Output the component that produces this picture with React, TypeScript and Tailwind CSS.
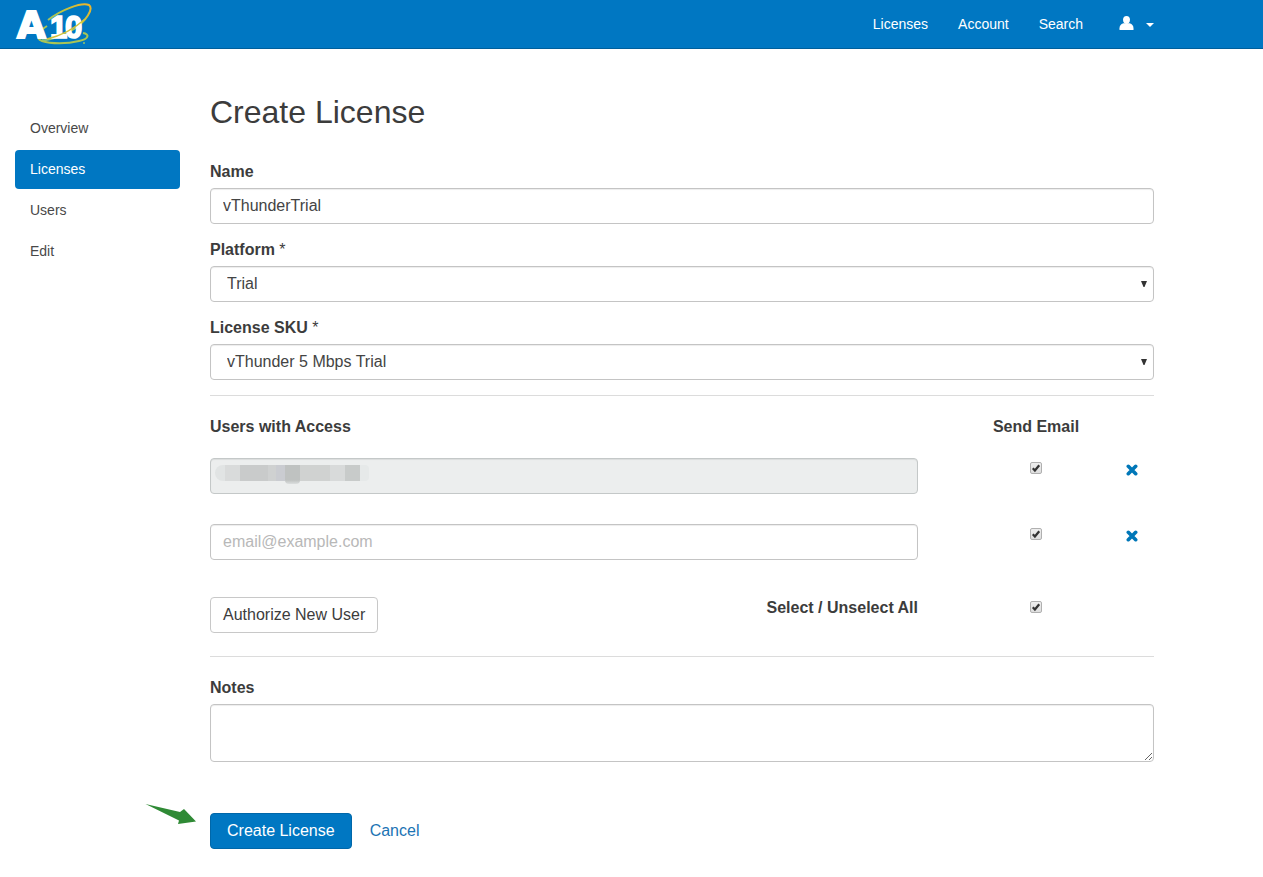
import { useState, type ReactNode } from "react";

const navLinks = ["Licenses", "Account", "Search"];
const sideLinks = ["Overview", "Licenses", "Users", "Edit"];

const control =
  "block w-full rounded-[4px] border border-[#c4c4c4] bg-white text-base text-[#444] shadow-[inset_0_1px_1px_rgba(0,0,0,0.075)] outline-none focus:border-[#0077c2]";

function Logo() {
  return (
    <svg width="80" height="44" viewBox="0 0 80 44" role="img" aria-label="A10">
      <defs>
        <linearGradient id="orbit" x1="0" y1="1" x2="1" y2="0">
          <stop offset="0" stopColor="#7fbf8a" />
          <stop offset="0.6" stopColor="#b9c544" />
          <stop offset="1" stopColor="#f0b429" />
        </linearGradient>
      </defs>
      <path
        d="M33 18 C46 8 66 0 74 3 C79 7 71 19 59 27 C46 35 32 39 27 38"
        fill="none"
        stroke="url(#orbit)"
        strokeWidth="2"
      />
      <path
        d="M68 31 C75 32 74 37 64 39 C52 42 36 42 27 39 C19 36 24 29 32 24"
        fill="none"
        stroke="#a9c455"
        strokeWidth="2"
      />
      <text
        x="2"
        y="36"
        fontFamily="DejaVu Sans"
        fontWeight="700"
        fontSize="37"
        fill="#fff"
        stroke="#fff"
        strokeWidth="2"
      >
        A
      </text>
      <text
        x="35 50"
        y="36"
        fontFamily="Liberation Sans"
        fontWeight="700"
        fontSize="31"
        fill="#fff"
        stroke="#fff"
        strokeWidth="1.600"
      >
        10
      </text>
      <path d="M70 17 C58 28 45 34 32 37" fill="none" stroke="#d3c33a" strokeWidth="1.400" />
      <circle cx="69" cy="41" r="1" fill="#8fc36b" />
    </svg>
  );
}

function UserIcon() {
  return (
    <svg width="15" height="14" viewBox="0 0 15 14" fill="#fff" aria-hidden="true">
      <path d="M7.5 0C9.7 0 11 1.5 11 3.7C11 6 9.600 8 7.500 8C5.400 8 4 6 4 3.700C4 1.500 5.300 0 7.500 0Z" />
      <path d="M4.300 7.200H10.700C13.300 8.100 14.500 9.700 14.500 12.200V14H0.500V12.200C0.500 9.700 1.700 8.100 4.300 7.200Z" />
    </svg>
  );
}

function Header() {
  return (
    <header className="border-b border-[#005f9b] bg-[#0077c2]">
      <div className="flex h-12 max-w-[1169px] items-center justify-between px-[15px]">
        <a href="#home" aria-label="A10 home">
          <Logo />
        </a>
        <nav className="flex items-center gap-[30px] text-sm text-white">
          {navLinks.map((label) => (
            <a key={label} href={"#" + label.toLowerCase()}>
              {label}
            </a>
          ))}
          <button type="button" aria-label="User menu" className="ml-[6px] flex items-center gap-3 pb-[2px]">
            <UserIcon />
            <svg width="8" height="4" viewBox="0 0 8 4" fill="#fff" className="mt-1" aria-hidden="true">
              <path d="M0 0H8L4 4Z" />
            </svg>
          </button>
        </nav>
      </div>
    </header>
  );
}

function Sidebar() {
  return (
    <nav className="flex w-[165px] shrink-0 flex-col gap-[2px] pt-[60px] text-sm">
      {sideLinks.map((label) => (
        <a
          key={label}
          href={"#side-" + label.toLowerCase()}
          className={
            label === "Licenses"
              ? "rounded-[4px] bg-[#0077c2] px-[15px] py-[9px] leading-[21px] text-white"
              : "rounded-[4px] px-[15px] py-[9px] leading-[21px] text-[#484848]"
          }
        >
          {label}
        </a>
      ))}
    </nav>
  );
}

function Label({ htmlFor, required, children }: { htmlFor: string; required?: boolean; children: ReactNode }) {
  return (
    <label htmlFor={htmlFor} className="mb-1 block leading-6 font-bold">
      {children}
      {required && <span className="font-normal"> *</span>}
    </label>
  );
}

function Select({ id, options }: { id: string; options: string[] }) {
  return (
    <div className="relative">
      <select id={id} className={control + " h-9 appearance-none px-4"}>
        {options.map((option) => (
          <option key={option}>{option}</option>
        ))}
      </select>
      <svg
        width="6"
        height="6"
        viewBox="0 0 6 6"
        className="pointer-events-none absolute top-[15px] right-[7px]"
        aria-hidden="true"
      >
        <path d="M0 0H6L3.500 6H2.500Z" fill="#333" />
      </svg>
    </div>
  );
}

function Checkbox({ id, label, checked, onChange }: { id: string; label?: string; checked: boolean; onChange: () => void }) {
  return (
    <span className="relative block size-3">
      <input
        id={id}
        type="checkbox"
        aria-label={label}
        checked={checked}
        onChange={onChange}
        className="block size-3 appearance-none rounded-[2px] border border-[#b0b0b0] bg-linear-to-b from-[#eee] to-[#dedede]"
      />
      {checked && (
        <svg width="12" height="12" viewBox="0 0 13 13" className="pointer-events-none absolute inset-0" aria-hidden="true">
          <path d="M3 6.800L5.300 9.200L10 3.500" fill="none" stroke="#333" strokeWidth="2.400" />
        </svg>
      )}
    </span>
  );
}

function RemoveButton({ label }: { label: string }) {
  return (
    <button type="button" aria-label={label} className="mt-[2px] mr-4 justify-self-end text-[#0077b8]">
      <svg width="12" height="12" viewBox="0 0 12 12" aria-hidden="true">
        <path d="M2.300 2.300L9.700 9.700M9.700 2.300L2.300 9.700" stroke="currentColor" strokeWidth="3.600" strokeLinecap="round" />
      </svg>
    </button>
  );
}

function RedactedText() {
  return (
    <div className="pointer-events-none absolute top-[7px] left-[5px] flex h-4 items-start" aria-hidden="true">
      <span className="h-4 w-[10px] rounded-l-full bg-[#e1e4e4]" />
      <span className="h-4 w-[15px] bg-[#d9dbdb]" />
      <span className="h-4 w-[28px] bg-[#c9cbcb]" />
      <span className="h-4 w-[8px] bg-[#cfd1d1]" />
      <span className="h-4 w-[9px] bg-[#caccd1]" />
      <span className="h-[19px] w-[15px] rounded-b bg-linear-to-b from-[#bfc2c1] from-80% to-[#dcdfdf]" />
      <span className="h-4 w-[30px] bg-[#d0d2d1]" />
      <span className="h-4 w-[15px] bg-[#d8dada]" />
      <span className="h-4 w-[15px] bg-[#c8cbca]" />
      <span className="h-4 w-[9px] rounded-r bg-[#e6e9e9]" />
    </div>
  );
}

function PointerArrow() {
  return (
    <svg
      width="52"
      height="22"
      viewBox="0 0 52 22"
      className="pointer-events-none absolute -top-[10px] -left-[65px]"
      aria-hidden="true"
    >
      <path d="M0.500 1L35 9L39 6L51 18.500L33 21L34 17.500Z" fill="#2f8a35" />
    </svg>
  );
}

export default function App() {
  const [name, setName] = useState("vThunderTrial");
  const [first, setFirst] = useState(true);
  const [second, setSecond] = useState(true);
  const [all, setAll] = useState(true);

  const toggleAll = () => {
    setFirst(!all);
    setSecond(!all);
    setAll(!all);
  };

  return (
    <div className="bg-white font-['Liberation_Sans',Arial,sans-serif] text-base text-[#3c3c3c]">
      <Header />
      <div className="flex max-w-[1169px] gap-[30px] px-[15px] pb-7">
        <Sidebar />
        <main className="min-w-0 flex-1 pt-[43px]">
          <h1 className="mb-7 text-[32px] leading-10">Create License</h1>
          <form onSubmit={(event) => event.preventDefault()}>
            <div className="flex flex-col gap-[14px]">
              <div>
                <Label htmlFor="name">Name</Label>
                <input
                  id="name"
                  type="text"
                  value={name}
                  onChange={(event) => setName(event.target.value)}
                  className={control + " h-9 px-3"}
                />
              </div>
              <div>
                <Label htmlFor="platform" required>
                  Platform
                </Label>
                <Select id="platform" options={["Trial"]} />
              </div>
              <div>
                <Label htmlFor="sku" required>
                  License SKU
                </Label>
                <Select id="sku" options={["vThunder 5 Mbps Trial"]} />
              </div>
            </div>

            <hr className="mt-[15px] mb-[19px] border-[#dcdcdc]" />

            <div className="mb-[19px] grid grid-cols-4 leading-6 font-bold">
              <h2 className="col-span-3">Users with Access</h2>
              <h2 className="text-center">Send Email</h2>
            </div>

            <div className="mb-[30px] grid grid-cols-4">
              <div className="relative col-span-3">
                <input
                  type="email"
                  aria-label="Account email"
                  disabled
                  className="block h-9 w-full rounded-[4px] border border-[#c4c8c8] bg-[#eceeee] px-3 shadow-[inset_0_1px_1px_rgba(0,0,0,0.075)]"
                />
                <RedactedText />
              </div>
              <div className="grid grid-cols-[1fr_auto_1fr] items-start pt-1">
                <span />
                <Checkbox id="send-first" label="Send email to account user" checked={first} onChange={() => setFirst(!first)} />
                <RemoveButton label="Remove account user" />
              </div>
            </div>

            <div className="mb-[37px] grid grid-cols-4">
              <input
                type="email"
                aria-label="User email"
                placeholder="email@example.com"
                className={control + " col-span-3 h-9 px-3 placeholder:text-[#b8b8b8]"}
              />
              <div className="grid grid-cols-[1fr_auto_1fr] items-start pt-1">
                <span />
                <Checkbox id="send-second" label="Send email to new user" checked={second} onChange={() => setSecond(!second)} />
                <RemoveButton label="Remove new user" />
              </div>
            </div>

            <div className="grid grid-cols-4">
              <div className="col-span-3 flex items-start justify-between">
                <button type="button" className="h-9 rounded-[4px] border border-[#c8c8c8] bg-white px-3">
                  Authorize New User
                </button>
                <label htmlFor="send-all" className="leading-[22px] font-bold">
                  Select / Unselect All
                </label>
              </div>
              <div className="flex justify-center pt-1">
                <Checkbox id="send-all" checked={all} onChange={toggleAll} />
              </div>
            </div>

            <hr className="mt-[23px] mb-[19px] border-[#dcdcdc]" />

            <Label htmlFor="notes">Notes</Label>
            <textarea id="notes" className={control + " h-[58px] px-3 py-1"} />

            <div className="relative mt-[51px] flex items-center gap-[18px]">
              <PointerArrow />
              <button type="submit" className="h-9 rounded-[4px] border border-[#0067a9] bg-[#0077c2] px-4 text-white">
                Create License
              </button>
              <a href="#cancel" className="text-[#1c74b4]">
                Cancel
              </a>
            </div>
          </form>
        </main>
      </div>
    </div>
  );
}
